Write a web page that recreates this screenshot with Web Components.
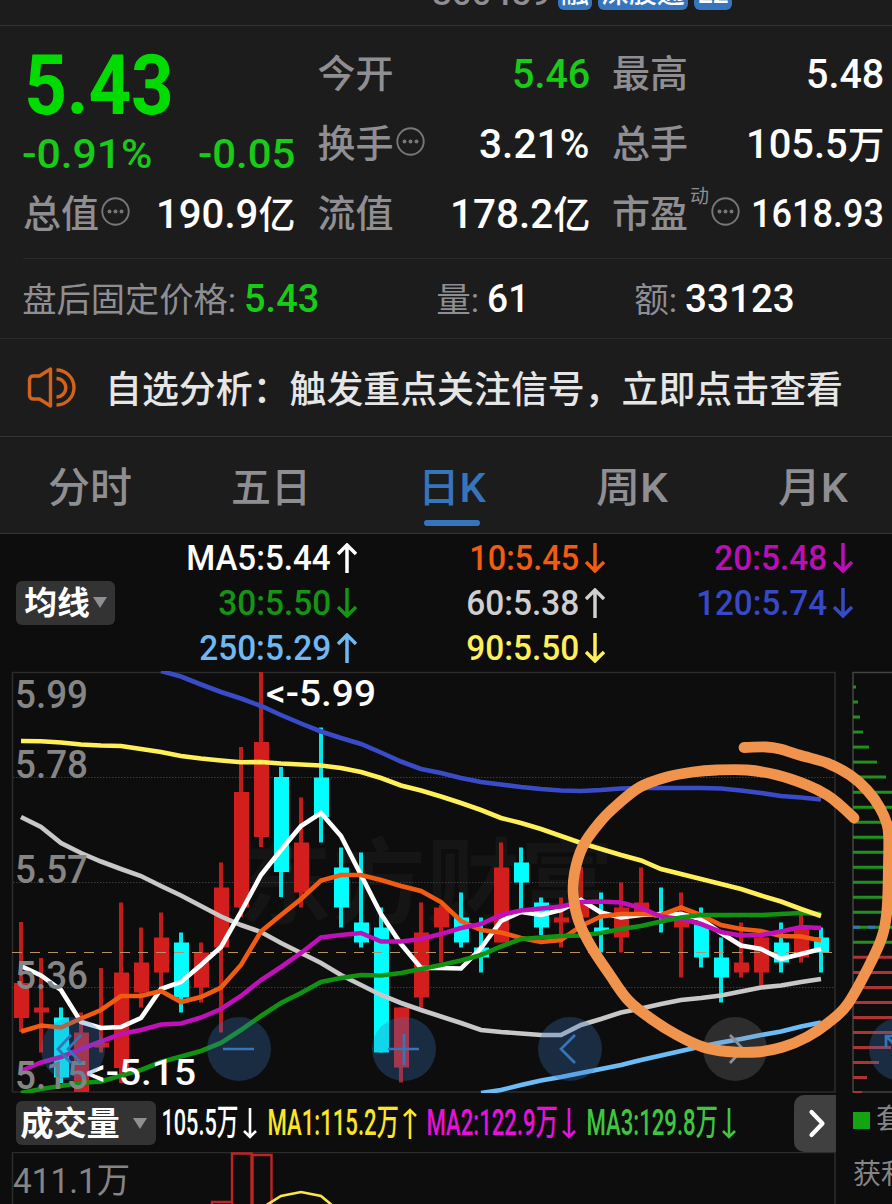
<!DOCTYPE html>
<html lang="zh-CN">
<head>
<meta charset="utf-8">
<title>300459</title>
<style>
  :root {
    --up: #d31e1e;
    --down: #00ffff;
    --green: #17cb17;
    --blue: #3674bc;
    --label: #8e8e93;
    --line: #343436;
    --panel: #1c1c1c;
    --chart: #0d0d0d;
  }
  body {
    margin: 0;
    width: 892px;
    height: 1204px;
    overflow: hidden;
    background: var(--chart);
    color: #fff;
    font-family: Roboto, "Noto Sans CJK SC", sans-serif;
    font-weight: 500;
    line-height: 1;
  }
</style>
</head>
<body>
<stock-app></stock-app>

<script>
// text squeezed or stretched to an exact width
class FitText extends HTMLElement {
  constructor() {
    super();
    this.attachShadow({ mode: "open" }).innerHTML = `
      <style>
        :host { display: inline-block; white-space: nowrap; flex: none; }
        span { display: inline-block; transform-origin: 0 50%; }
        ::slotted(i) { font-style: normal; font-size: 0.92em; }
      </style>
      <span><slot></slot></span>`;
  }
  connectedCallback() {
    const span = this.shadowRoot.querySelector("span");
    const w = Number(this.getAttribute("w"));
    const em = parseFloat(getComputedStyle(this).fontSize);
    const k = w / (span.offsetWidth - em * 0.05);
    this.style.width = w + "px";
    span.style.transform = `translateX(${-em * 0.025 * k}px) scaleX(${k})`;
  }
}
customElements.define("fit-text", FitText);

class TrendArrow extends HTMLElement {
  constructor() {
    super();
    this.attachShadow({ mode: "open" });
  }
  connectedCallback() {
    const w = Number(this.getAttribute("w") || 20);
    const h = Number(this.getAttribute("h") || 30);
    const flip = this.getAttribute("dir") === "down" ? `transform="rotate(180 ${w / 2} ${h / 2})"` : "";
    const a = w / 2 - 1;
    this.shadowRoot.innerHTML = `
      <style>
        :host { display: block; flex: none; }
        svg { display: block; }
      </style>
      <svg width="${w}" height="${h}" fill="none" stroke="currentColor" stroke-width="${w > 16 ? 3.5 : 2.6}">
        <path ${flip} d="M${w / 2} ${h}V2M1 ${a + 2}L${w / 2} 2L${w - 1} ${a + 2}"/>
      </svg>`;
  }
}
customElements.define("trend-arrow", TrendArrow);

class InfoDots extends HTMLElement {
  constructor() {
    super();
    this.attachShadow({ mode: "open" }).innerHTML = `
      <style>
        :host { display: block; flex: none; width: 29px; height: 29px; margin-bottom: 6px; }
        svg { display: block; }
      </style>
      <svg width="29" height="29">
        <circle cx="14.5" cy="14.5" r="13.2" fill="none" stroke="#77777a" stroke-width="1.9"/>
        <g fill="#77777a"><circle cx="8.5" cy="14.5" r="2"/><circle cx="14.5" cy="14.5" r="2"/><circle cx="20.5" cy="14.5" r="2"/></g>
      </svg>`;
  }
}
customElements.define("info-dots", InfoDots);

class StockTitle extends HTMLElement {
  constructor() {
    super();
    this.attachShadow({ mode: "open" }).innerHTML = `
      <style>
        :host { display: block; height: 25px; overflow: hidden; background: var(--panel); border-bottom: 1px solid var(--line); }
        .row { display: flex; gap: 6px; margin: -24px 0 0 433px; height: 34px; }
        .code { color: var(--label); font-size: 34px; margin-right: 2px; }
        b { box-sizing: border-box; display: flex; justify-content: center; background: var(--blue); border-radius: 6px; font-size: 28px; font-weight: 500; padding-top: 4px; overflow: hidden; }
      </style>
      <div class="row">
        <fit-text class="code" w="117">300459</fit-text>
        <b style="width:34px">融</b>
        <b style="width:90px"><fit-text w="82">深股通</fit-text></b>
        <b style="width:38px"><fit-text w="30">L2</fit-text></b>
      </div>`;
  }
}
customElements.define("stock-title", StockTitle);

// one "label ... value" cell
class QuoteCell extends HTMLElement {
  constructor() {
    super();
    this.attachShadow({ mode: "open" }).innerHTML = `
      <style>
        :host { display: flex; align-items: center; justify-content: space-between; height: 70px; font-size: 41px; }
        .label { display: flex; align-items: center; gap: 2px; color: var(--label); font-size: 38px; }
      </style>
      <div class="label"><slot name="label"></slot></div>
      <slot></slot>`;
  }
}
customElements.define("quote-cell", QuoteCell);

class QuotePanel extends HTMLElement {
  constructor() {
    super();
    this.attachShadow({ mode: "open" }).innerHTML = `
      <style>
        :host { display: block; background: var(--panel); }
        .grid { display: grid; grid-template-columns: repeat(3, 271px); column-gap: 23.5px; padding: 13px 0 9px 23px; }
        .price { grid-row: span 2; color: var(--green); }
        .last { color: #00dc00; font-size: 83px; font-weight: 700; display: block; margin: 5px 0 0 3px; }
        .change { display: flex; justify-content: space-between; font-size: 41px; margin-top: 7px; }
        .g { color: var(--green); }
        sup { font-size: 19px; font-weight: 400; align-self: flex-start; margin-top: -8px; line-height: 1; }
        .after { display: flex; align-items: center; height: 77px; padding-top: 2px; border-top: 1px solid #2a2a2c; margin-left: 23px; color: var(--label); font-size: 34px; font-weight: 400; }
        .after .v { color: #fff; font-size: 39px; font-weight: 500; margin-left: 10px; }
        .after .g { color: var(--green); }
      </style>
      <div class="grid">
        <div class="price">
          <fit-text class="last" w="146">5.43</fit-text>
          <div class="change"><fit-text w="128">-0.91%</fit-text><fit-text w="95">-0.05</fit-text></div>
        </div>
        <quote-cell><span slot="label">今开</span><fit-text class="g" w="76">5.46</fit-text></quote-cell>
        <quote-cell><span slot="label">最高</span><fit-text w="76">5.48</fit-text></quote-cell>
        <quote-cell><span slot="label">换手</span><info-dots slot="label"></info-dots><fit-text w="109">3.21%</fit-text></quote-cell>
        <quote-cell><span slot="label">总手</span><fit-text w="136">105.5<i>万</i></fit-text></quote-cell>
        <quote-cell><span slot="label">总值</span><info-dots slot="label"></info-dots><fit-text w="137">190.9<i>亿</i></fit-text></quote-cell>
        <quote-cell><span slot="label">流值</span><fit-text w="138">178.2<i>亿</i></fit-text></quote-cell>
        <quote-cell><span slot="label">市盈</span><sup slot="label">动</sup><info-dots slot="label"></info-dots><fit-text w="131" style="font-size:38px">1618.93</fit-text></quote-cell>
      </div>
      <div class="after">
        <fit-text w="212">盘后固定价格:</fit-text><fit-text class="v g" w="73">5.43</fit-text>
        <fit-text w="41" style="margin-left:119px">量:</fit-text><fit-text class="v" w="40">61</fit-text>
        <fit-text w="41" style="margin-left:107px">额:</fit-text><fit-text class="v" w="108">33123</fit-text>
      </div>`;
  }
}
customElements.define("quote-panel", QuotePanel);

class NoticeBar extends HTMLElement {
  constructor() {
    super();
    this.attachShadow({ mode: "open" }).innerHTML = `
      <style>
        :host { display: flex; align-items: center; height: 97px; padding-left: 26px; gap: 29px; background: var(--panel); border-top: 1px solid #2a2a2c; color: #e6e6e6; font-family: "Noto Sans CJK SC", sans-serif; font-size: 37px; white-space: nowrap; }
        svg { flex: none; }
      </style>
      <svg width="51" height="44" fill="none" stroke="#d4611c" stroke-width="3.4" stroke-linejoin="round">
        <path d="M3.5 13.5Q4 10 7.500 10H13.500L24.500 3V40L13.500 33H7.500Q4 33 3.500 29.500Z"/>
        <path d="M30.500 12.500A9 9 0 0 1 30.500 31M30.500 4A17.500 17.500 0 0 1 30.500 39"/>
      </svg>
      <slot></slot>`;
  }
}
customElements.define("notice-bar", NoticeBar);

class PeriodTabs extends HTMLElement {
  constructor() {
    super();
    const tabs = [["分时", 82], ["五日", 78], ["日K", 66], ["周K", 70], ["月K", 68]];
    this.attachShadow({ mode: "open" }).innerHTML = `
      <style>
        :host { display: flex; height: 96px; overflow: hidden; background: var(--panel); border-top: 1px solid var(--line); border-bottom: 1px solid var(--line); color: var(--label); font-size: 41px; }
        div { flex: 0 0 180.7px; display: flex; flex-direction: column; align-items: center; padding-top: 31px; box-sizing: border-box; }
        .on { color: var(--blue); }
        .on::after { content: ""; width: 56px; height: 6px; border-radius: 3px; background: var(--blue); margin-top: 11px; }
      </style>
      ${tabs.map(([t, w], i) => `<div class="${i === 2 ? "on" : ""}"><fit-text w="${w}">${t}</fit-text></div>`).join("")}`;
  }
}
customElements.define("period-tabs", PeriodTabs);

class DropButton extends HTMLElement {
  constructor() {
    super();
    this.attachShadow({ mode: "open" }).innerHTML = `
      <style>
        :host { display: flex; align-items: center; justify-content: space-between; box-sizing: border-box; flex: none; height: 44px; background: #333; border-radius: 6px; font-weight: 700; }
        i { border: 7px solid transparent; border-top: 11px solid #8e8e93; border-bottom: 0; }
      </style>
      <slot></slot><i></i>`;
  }
}
customElements.define("drop-button", DropButton);

class MaLegend extends HTMLElement {
  constructor() {
    super();
    const items = [
      ["MA5:5.44", 143, "#fff", "up"], ["10:5.45", 108, "#f25c12", "down"], ["20:5.48", 111, "#bb0fb5", "down"],
      ["30:5.50", 111, "#159415", "down"], ["60:5.38", 111, "#cfcfcf", "up"], ["120:5.74", 129, "#3749c6", "down"],
      ["250:5.29", 130, "#6fb8f2", "up"], ["90:5.50", 111, "#fff05a", "down"]
    ];
    this.attachShadow({ mode: "open" }).innerHTML = `
      <style>
        :host { display: flex; align-items: center; height: 137px; padding-left: 16px; font-size: 35px; }
        drop-button { width: 99px; padding: 0 8px 0 9px; font-size: 32px; }
        .grid { display: grid; grid-template-columns: 242px 248px 248px; grid-auto-rows: 45px; }
        .grid div { display: flex; justify-content: flex-end; align-items: center; gap: 7px; }
        .grid fit-text { padding-top: 2px; }
      </style>
      <drop-button><fit-text w="64">均线</fit-text></drop-button>
      <div class="grid">
        ${items.map(([t, w, c, d]) => `<div style="color:${c}"><fit-text w="${w}">${t}</fit-text><trend-arrow dir="${d}"></trend-arrow></div>`).join("")}
      </div>`;
  }
}
customElements.define("ma-legend", MaLegend);

// [high, body top, body bottom, low, rising]
const CANDLES = [
  [922, 983, 1018, 1032, 1], [958, 1007.5, 1012.5, 1052.5, 1], [1007.5, 1017.5, 1077.5, 1083, 0], [1012.5, 1032.5, 1092, 1092, 1],
  [968, 1042.5, 1047.5, 1052.5, 1], [902.5, 972.5, 1068, 1083, 1], [927.5, 962.5, 992.5, 1007.5, 1], [912.5, 937.5, 972.5, 991, 1],
  [932.5, 942.5, 997.5, 1012.5, 0], [942.5, 952.5, 987.5, 1002.5, 1], [862.5, 887.5, 947.5, 1032.5, 1], [747, 792, 907.5, 917, 1],
  [672, 742, 837, 847, 1], [767, 777, 872, 897, 0], [797.5, 842.5, 892.5, 907.5, 1], [727.5, 777.5, 817, 842.5, 0],
  [847.5, 867.5, 907.5, 927.5, 0], [852.5, 922.5, 942.5, 947.5, 0], [907.5, 927.5, 1052.5, 1052.5, 0], [1007.5, 1007.5, 1067.5, 1082.5, 1],
  [902.5, 932.5, 997.5, 1007.5, 1], [905, 907.5, 927.5, 962.5, 1], [892.5, 917.5, 942.5, 947.5, 0], [917.5, 947.5, 957.5, 972.5, 0],
  [842.5, 867.5, 942.5, 942.5, 1], [847.5, 862.5, 882.5, 910, 0], [897.5, 902.5, 927.5, 935, 0], [897.5, 917.5, 922.5, 947.5, 1],
  [867, 902.5, 917.5, 917.5, 1], [892.5, 927.5, 932.5, 952.5, 0], [882.5, 907.5, 937.5, 952.5, 1], [867.5, 902.5, 912.5, 912.5, 1],
  [887.5, 912.5, 917.5, 932.5, 0], [892.5, 912.5, 927.5, 977.5, 1], [907.5, 922.5, 957.5, 967.5, 0], [937.5, 957.5, 977.5, 1002.5, 0],
  [922.5, 962.5, 972.5, 977.5, 1], [930, 937.5, 972.5, 985.5, 1], [922.5, 942.5, 962.5, 972.5, 0], [912.5, 927.5, 957.5, 962.5, 1],
  [927.5, 937.5, 952.5, 972.5, 0]
];

// each average starts at candle "from"
const AVERAGES = [
  { color: "#3a4bc8", from: 7, y: [671, 676.5, 684.5, 692, 698.5, 706, 715, 723.5, 731.5, 738, 744, 752.5, 761.5, 769, 773, 778, 782, 784.5, 787, 789, 790.5, 791, 790, 788.5, 788, 788, 788, 788, 788.5, 790.5, 793, 796, 797.5, 799.5] },
  { color: "#c8c8c8", from: 0, y: [817, 827, 843, 853, 861.5, 869, 876, 886, 895.5, 906, 916.5, 925, 932, 943, 953, 963, 975, 985, 995, 1003, 1010, 1016.5, 1023, 1030, 1032, 1033.5, 1035, 1035, 1025, 1019, 1012.5, 1008.5, 1004, 1000, 998, 995.5, 991.5, 987.5, 985.5, 982, 979] },
  { color: "#ffffff", from: 0, y: [966, 975.5, 990, 1022, 1028, 1027, 1018, 989, 982, 965, 947, 912, 875, 850, 826, 813, 836, 875, 914, 944, 968, 968, 968.5, 948, 921, 912, 915, 910, 900, 912.5, 917.5, 915, 914, 914, 919, 933, 945.5, 949, 959, 954, 949] },
  { color: "#f25c12", from: 0, y: [1031.5, 1025.5, 1027.5, 1018.5, 1010, 996, 996, 991, 1002, 997, 987.5, 965, 931.5, 915, 899, 880.5, 875, 875, 880, 886, 891, 902, 921, 930, 932.5, 938, 942, 940, 926, 916.5, 914, 914, 915, 907.5, 915, 925, 929, 931, 936, 936.5, 940.5] },
  { color: "#c010b8", from: 0, y: [1071, 1062.5, 1057, 1049, 1041.5, 1034, 1030, 1024.5, 1023.5, 1017.5, 1009, 996, 980, 967, 953, 937.5, 935, 933, 941.5, 941.5, 939, 934, 928, 924, 915, 910.5, 908.5, 906.5, 902, 901.5, 902.5, 908, 916.5, 919, 924, 932, 935.5, 935, 931.5, 927, 928] },
  { color: "#129212", from: 0, y: [1093, 1089, 1086, 1083, 1081.5, 1075.5, 1070, 1062, 1056.5, 1051, 1043, 1030, 1016, 1003, 993, 982, 978, 975, 975.5, 973, 969, 965, 960.5, 955, 946.5, 939, 937.5, 936, 935.5, 933, 929, 926, 921.5, 917.5, 915, 915, 915, 915, 914, 913, 914] },
  { color: "#6cbcf8", from: 23, y: [1093, 1090, 1085, 1080.5, 1077, 1073, 1069, 1065, 1060, 1055.5, 1051, 1046.5, 1042.5, 1039, 1035, 1031.5, 1026.5, 1022.5] },
  { color: "#fff05a", from: 0, y: [741, 741.3, 742.5, 744.5, 745.5, 746, 749, 752, 756, 758.5, 760.5, 762.3, 762, 763.5, 764.5, 765.5, 768, 772, 778, 785.5, 790.5, 796.5, 803, 810, 818, 823, 829, 836, 843, 849, 855, 860.5, 869, 874, 879, 884, 889, 895.5, 901.5, 909, 916] }
];

class KChart extends HTMLElement {
  constructor() {
    super();
    const x = i => 21 + i * 20;
    const candles = CANDLES.map(([hi, top, bottom, lo, rise], i) => `
      <g fill="var(--${rise ? "up" : "down"})">
        <rect x="${x(i) - 2}" y="${hi}" width="4" height="${lo - hi}" opacity="0.9"/>
        <rect x="${x(i) - 7}" y="${top}" width="15" height="${bottom - top}"/>
      </g>`).join("");
    const lines = AVERAGES.map(a =>
      `<polyline stroke="${a.color}" points="${a.y.map((y, i) => x(i + a.from) + "," + y).join(" ")}"/>`).join("");
    const axis = [["5.99", 708], ["5.78", 777.5], ["5.57", 883], ["5.36", 988.5], ["5.15", 1089]].map(([t, y]) =>
      `<text x="15" y="${y}" textLength="73" lengthAdjust="spacingAndGlyphs">${t}</text>`).join("");
    this.attachShadow({ mode: "open" }).innerHTML = `
      <style>
        :host { display: block; flex: none; width: 840px; height: 422px; }
        svg { display: block; }
        .axis { fill: #858585; font-size: 38px; font-weight: 500; }
        .tag { fill: #fff; font-size: 37px; font-weight: 500; }
      </style>
      <svg width="840" height="422" viewBox="0 671 840 422">
        <path d="M12.500 1092V672.500H835V1092Z" fill="none" stroke="#2b2b2b" stroke-width="1.6"/>
        <text x="238" y="917" font-size="94" font-weight="700" fill="#151515" textLength="376">东方财富</text>
        <path d="M13 777.500H834M13 882.500H834M13 987.500H834" stroke="#3c3c3c" stroke-dasharray="1.500 1.500"/>
        ${candles}
        <path d="M12 952.500H834" stroke="#b9915f" stroke-width="1.2" stroke-dasharray="10 8"/>
        <g fill="none" stroke-width="4.600">${lines}</g>
        <g class="axis">${axis}</g>
        <g class="tag">
          <text x="266" y="706" textLength="110" lengthAdjust="spacingAndGlyphs">&lt;-5.99</text>
          <text x="86" y="1085" textLength="110" lengthAdjust="spacingAndGlyphs">&lt;-5.15</text>
        </g>
      </svg>`;
  }
}
customElements.define("k-chart", KChart);

// chip distribution, cut off by the screen edge
class ChipChart extends HTMLElement {
  constructor() {
    super();
    const widths = [3, 5, 7, 10, 16, 24, 33, 40, 40, 40, 40, 40, 40, 40, 40, 40, 40, 40, 40, 40, 40, 40, 40, 40, 38, 26, 14, 9];
    const bars = widths.map((w, i) => {
      const y = 687 + i * 15.02;
      return `<path d="M853 ${y}h${w}" stroke="${y > 950 ? "#ad3434" : "#219021"}"/>` +
        (i === 16 ? `<path d="M853 ${y}h40" stroke="#3674bc" stroke-dasharray="7 8"/>` : "");
    }).join("");
    this.attachShadow({ mode: "open" }).innerHTML = `
      <style>
        :host { display: block; flex: none; width: 52px; }
        svg { display: block; }
      </style>
      <svg width="52" height="422" viewBox="840 671 52 422">
        <path d="M892 672.500H853V1092H892" fill="none" stroke="#444" stroke-width="1.5"/>
        <g stroke-width="3">${bars}</g>
      </svg>`;
  }
}
customElements.define("chip-chart", ChipChart);

// round chart controls
class ChartControls extends HTMLElement {
  constructor() {
    super();
    const icons = [
      "M30 18L17 32L30 46M40 18L27 32L40 46",
      "M16 32H47",
      "M16 32H47M32 17V48",
      "M37 18L23 32L37 46",
      "M27 18L40 32L27 46",
      "M17 30V19H28M17 19L45 47"
    ];
    this.attachShadow({ mode: "open" }).innerHTML = `
      <style>
        :host { position: absolute; left: 41px; top: 346px; display: flex; gap: 101.600px; }
        svg { flex: none; border-radius: 50%; background: rgba(54, 116, 188, 0.3); stroke: #3674bc; fill: none; stroke-width: 2.7; }
        svg:nth-of-type(5) { background: rgba(142, 142, 147, 0.25); stroke: #8e8e93; }
      </style>
      ${icons.map(d => `<svg width="64" height="64"><path d="${d}"/></svg>`).join("")}`;
  }
}
customElements.define("chart-controls", ChartControls);

// freehand marker stroke
class MarkerStroke extends HTMLElement {
  constructor() {
    super();
    const p = [[744, 747.5], [766, 747], [780, 749], [801, 755.5], [827, 763], [850, 775], [867, 790], [880, 808], [888, 829], [888.5, 863],
      [887, 910], [882, 937], [868, 968], [847, 1005], [828, 1023], [807, 1037], [783, 1047], [757, 1052], [727, 1051.5], [703, 1047],
      [677, 1035], [650, 1018], [628, 1000], [610, 975], [592, 948], [579, 922], [573.5, 897], [574.5, 873], [583, 846], [600, 822],
      [617, 805], [640, 787], [667, 777], [693, 772], [717, 770], [747, 770], [777, 775], [807, 785], [827, 795], [840, 805], [854, 818]];
    let d = `M${p[0]}`;
    for (let i = 1; i < p.length; i++) {
      const a = p[i - 2] || p[i - 1], b = p[i - 1], c = p[i], e = p[i + 1] || c;
      d += `C${b[0] + (c[0] - a[0]) / 6} ${b[1] + (c[1] - a[1]) / 6} ${c[0] - (e[0] - b[0]) / 6} ${c[1] - (e[1] - b[1]) / 6} ${c}`;
    }
    this.attachShadow({ mode: "open" }).innerHTML = `
      <style>
        :host { position: absolute; left: 0; top: 0; }
        svg { display: block; }
      </style>
      <svg width="892" height="422" viewBox="0 671 892 422" fill="none" stroke="#f0934c" stroke-width="10.800" stroke-linecap="round">
        <path d="${d}"/>
      </svg>`;
  }
}
customElements.define("marker-stroke", MarkerStroke);

class VolumePanel extends HTMLElement {
  constructor() {
    super();
    const items = [["105.5万", 76, "#fff", "down"], ["MA1:115.2万", 130, "#fbe626", "up"],
      ["MA2:122.9万", 130, "#e512dd", "down"], ["MA3:129.8万", 130, "#3fc63f", "down"]];
    this.attachShadow({ mode: "open" }).innerHTML = `
      <style>
        :host { display: flex; height: 111px; overflow: hidden; }
        .main { width: 836px; flex: none; }
        .bar { display: flex; align-items: center; height: 60px; padding: 2px 0 0 16px; margin-top: -1px; box-sizing: border-box; font-size: 36px; }
        drop-button { width: 140px; padding: 0 9px 0 5px; font-size: 33px; margin-right: 6px; }
        .bar div { display: flex; align-items: center; gap: 5px; margin-right: 10.500px; }
        .next { display: block; margin-left: auto; border-radius: 10px 0 0 10px; background: #404040; }
        .vol { display: block; }
        .vol text { fill: #858585; font-size: 35px; font-weight: 400; }
        .side { flex: 1; padding: 13px 0 0 17px; color: #858588; font-size: 28px; font-weight: 400; white-space: nowrap; overflow: hidden; }
        .side p { margin: 0; height: 55px; display: flex; }
        .side b { flex: none; width: 17px; height: 17px; margin: 6px 6px 0 0; background: #13a413; }
      </style>
      <div class="main">
        <div class="bar">
          <drop-button><fit-text w="98">成交量</fit-text></drop-button>
          ${items.map(([t, w, c, d]) => `<div style="color:${c}"><fit-text w="${w}">${t}</fit-text><trend-arrow dir="${d}" w="14" h="31"></trend-arrow></div>`).join("")}
          <svg class="next" width="42" height="57" fill="none" stroke="#fff" stroke-width="4.200" stroke-linecap="round" stroke-linejoin="round"><path d="M17.500 17L28.500 28.500L17.500 40"/></svg>
        </div>
        <svg class="vol" width="836" height="52" viewBox="0 1152 836 52">
          <path d="M12.500 1206V1152.500H835V1206" fill="none" stroke="#2b2b2b" stroke-width="1.600"/>
          <g fill="none" stroke="#bd2525" stroke-width="2.400"><path d="M212 1206V1202H232V1206M232 1206V1153.500H251.500V1206M252.500 1206V1155H271.500V1206"/></g>
          <path d="M265 1206L281 1196L301 1192L321 1196L333 1206" fill="none" stroke="#fbe64a" stroke-width="2.600"/>
          <text x="13" y="1193" textLength="117" lengthAdjust="spacingAndGlyphs">411.1万</text>
        </svg>
      </div>
      <div class="side"><p><b></b>套</p><p>获利</p></div>`;
  }
}
customElements.define("volume-panel", VolumePanel);

class StockApp extends HTMLElement {
  constructor() {
    super();
    this.attachShadow({ mode: "open" }).innerHTML = `
      <style>
        :host { display: flex; flex-direction: column; width: 892px; height: 1204px; overflow: hidden; }
        :host > * { flex: none; }
        .charts { display: flex; position: relative; height: 422px; overflow: hidden; }
      </style>
      <stock-title></stock-title>
      <quote-panel></quote-panel>
      <notice-bar><fit-text w="736">自选分析：触发重点关注信号，立即点击查看</fit-text></notice-bar>
      <period-tabs></period-tabs>
      <ma-legend></ma-legend>
      <div class="charts">
        <k-chart></k-chart>
        <chip-chart></chip-chart>
        <chart-controls></chart-controls>
        <marker-stroke></marker-stroke>
      </div>
      <volume-panel></volume-panel>`;
  }
}
customElements.define("stock-app", StockApp);
</script>
</body>
</html>
